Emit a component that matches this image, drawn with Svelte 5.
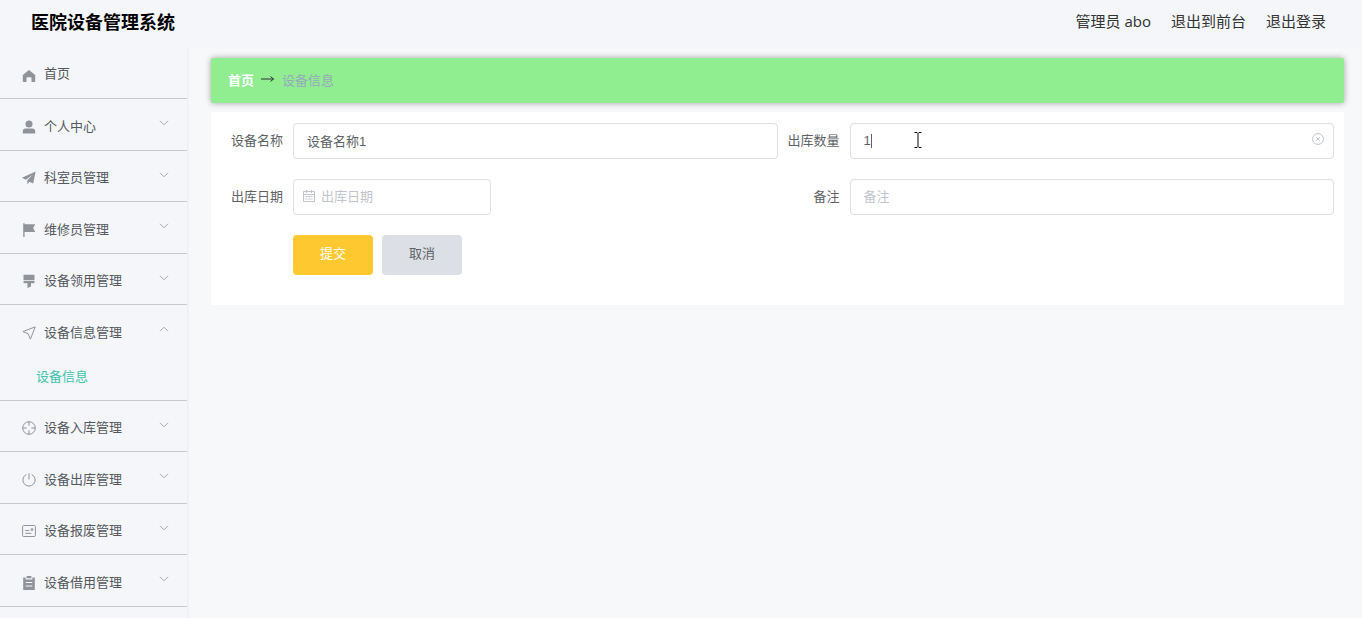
<script lang="ts">
    type Item = {title: string; icon: string; children?: string[]}

    const menu: Item[] = [
        {title: '首页', icon: 'home'},
        {title: '个人中心', icon: 'user', children: []},
        {title: '科室员管理', icon: 'promotion', children: []},
        {title: '维修员管理', icon: 'flag', children: []},
        {title: '设备领用管理', icon: 'brush', children: []},
        {title: '设备信息管理', icon: 'position', children: ['设备信息']},
        {title: '设备入库管理', icon: 'aim', children: []},
        {title: '设备出库管理', icon: 'switch', children: []},
        {title: '设备报废管理', icon: 'postcard', children: []},
        {title: '设备借用管理', icon: 'order', children: []},
    ]

    let opened = $state('设备信息管理')
    let form = $state({name: '设备名称1', count: '1', date: '', remark: ''})

    function toggle(title: string) {
        opened = opened === title ? '' : title
    }
</script>

{#snippet icon(name: string)}
    <svg class="icon" viewBox="0 0 14 14" aria-hidden="true">
        {#if name === 'home'}
            <path d="M7 1 .8 6v6.2q0 .8.8.8h2.900V9.200q0-.9.9-.9h3.200q.9 0 .9.9V13h2.900q.8 0 .8-.8V6z" />
        {:else if name === 'user'}
            <circle cx="7" cy="3.900" r="3.500" />
            <path d="M.8 13v-1.600Q.8 8.600 3.600 8.600h6.800q2.800 0 2.800 2.800V13q0 .5-.5.5H1.300Q.8 13.500 .8 13z" />
        {:else if name === 'promotion'}
            <path d="M13.600 .6 0 6.700 3.800 8.700 11 3.400 5.300 9.300V13.200l2.200-2.500 3.700 1.900z" />
        {:else if name === 'flag'}
            <path d="M1.200 .3h1.400v.9h10.600L11.200 5l2 4H2.600v5H1.200z" />
        {:else if name === 'brush'}
            <path d="M1.500 .7h11v5.200h-11zM1.500 6.800h11v1.600q0 .8-.8.8H9v3.300L5.500 14V9.200H2.300q-.8 0-.8-.8z" />
        {:else if name === 'position'}
            <path class="line" d="M13.200 .9 .9 5.600 6.100 7.700l2.300 5.500z" />
        {:else if name === 'aim'}
            <circle class="line" cx="7" cy="7" r="6.300" />
            <path class="line" d="M7 .7v4M7 9.300v4M.7 7h4M9.300 7h4" />
        {:else if name === 'switch'}
            <path class="line" d="M4.300 1.500a6.100 6.100 0 1 0 5.400 0M7 .3v6.200" />
        {:else if name === 'postcard'}
            <rect class="line" x=".6" y="1.500" width="12.800" height="11" rx="1" />
            <path class="line" d="M3.300 6.500h4M3.300 9.300h6M9.200 4.800h1.600v1.500H9.200z" />
        {:else}
            <path fill-rule="evenodd" d="M4.600 0h4.800v2.200H4.600zM1.200 1.500h2.400v2h6.800v-2h2.400V14H1.200zM3.700 6v1.100h6.600V6zm0 3.500v1.100h6.600V9.500z" />
        {/if}
    </svg>
{/snippet}

<div class="page">
    <header>
        <h1>医院设备管理系统</h1>
        <nav class="account">
            <span>管理员 abo</span>
            <a href="#front">退出到前台</a>
            <a href="#logout">退出登录</a>
        </nav>
    </header>

    <div class="body">
        <aside>
            <ul class="menu">
                {#each menu as item}
                    <li>
                        {#if item.children}
                            <button
                                class="row"
                                type="button"
                                aria-expanded={opened === item.title}
                                onclick={() => toggle(item.title)}
                            >
                                {@render icon(item.icon)}
                                <span>{item.title}</span>
                                <svg class="arrow" class:up={opened === item.title} viewBox="0 0 10 6" aria-hidden="true">
                                    <path d="M1 .8l4 4 4-4" />
                                </svg>
                            </button>
                            {#if opened === item.title}
                                {#each item.children as child}
                                    <a class="child" href="#info">{child}</a>
                                {/each}
                            {/if}
                        {:else}
                            <a class="row home" href="#home">
                                {@render icon(item.icon)}
                                <span>{item.title}</span>
                            </a>
                        {/if}
                    </li>
                {/each}
            </ul>
        </aside>

        <main>
            <nav class="breadcrumb">
                <a href="#home">首页</a>
                <svg viewBox="0 0 14 8" aria-hidden="true"><path d="M0 4h12.500M9.500 1.500 12.500 4l-3 2.500" /></svg>
                <span>设备信息</span>
            </nav>

            <form onsubmit={(event) => event.preventDefault()}>
                <div class="field">
                    <label for="name">设备名称</label>
                    <input id="name" type="text" placeholder="设备名称" bind:value={form.name} />
                </div>
                <div class="field">
                    <label for="count">出库数量</label>
                    <div class="control">
                        <input id="count" type="text" placeholder="出库数量" bind:value={form.count} />
                        <span class="caret"></span>
                        <svg class="pointer" viewBox="0 0 8 16" aria-hidden="true">
                            <path d="M.5 .5H3l1 1 1-1h2.500M4 1.500v13M.5 15.500H3l1-1 1 1h2.500" />
                        </svg>
                        <button class="clear" type="button" aria-label="清空" onclick={() => (form.count = '')}>
                            <svg viewBox="0 0 12 12" aria-hidden="true">
                                <circle cx="6" cy="6" r="5.400" />
                                <path d="M4.200 4.200l3.600 3.600M7.800 4.200 4.200 7.800" />
                            </svg>
                        </button>
                    </div>
                </div>
                <div class="field">
                    <label for="date">出库日期</label>
                    <div class="control date">
                        <svg class="calendar" viewBox="0 0 12 12" aria-hidden="true">
                            <path d="M.5 1.500h11v10H.5zM.5 4.500h11M3.500 0v3M8.500 0v3M2.500 6.500h2M5 6.500h2M7.500 6.500h2M2.500 9h2M5 9h2M7.500 9h2" />
                        </svg>
                        <input id="date" type="text" placeholder="出库日期" bind:value={form.date} />
                    </div>
                </div>
                <div class="field">
                    <label for="remark">备注</label>
                    <input id="remark" type="text" placeholder="备注" bind:value={form.remark} />
                </div>
                <div class="actions">
                    <button class="submit" type="submit">提交</button>
                    <button class="cancel" type="button">取消</button>
                </div>
            </form>
        </main>
    </div>
</div>

<style>
    :global(body) {
        margin: 0;
        background: #f7f8fa;
    }

    .page {
        display: flex;
        flex-direction: column;
        min-height: 100vh;
        font-family: 'Liberation Sans', 'Noto Sans CJK SC', sans-serif;
        font-size: 13px;
        color: #606266;
    }

    .page :global(*) {
        box-sizing: border-box;
    }

    a {
        color: inherit;
        text-decoration: none;
    }

    button,
    input {
        font: inherit;
        color: inherit;
    }

    button {
        border: 0;
        background: none;
        padding: 0;
        cursor: pointer;
    }

    header {
        display: flex;
        align-items: center;
        justify-content: space-between;
        height: 48px;
        padding: 0 36px 2px 31px;
        background: #f4f6fa;
    }

    h1 {
        margin: 0;
        font-size: 18px;
        line-height: 24px;
        color: #000;
    }

    .account {
        display: flex;
        gap: 20px;
        padding-bottom: 4px;
        font-family: 'Open Sans', 'Noto Sans CJK SC', sans-serif;
        font-size: 15px;
        line-height: 20px;
        color: #333;
    }

    .body {
        display: flex;
        flex: 1;
    }

    aside {
        flex: none;
        width: 189px;
        border-right: 2px solid #eff1f4;
        background: #f4f6fa;
    }

    .menu {
        list-style: none;
        margin: 0;
        padding: 0;
    }

    .menu li {
        border-bottom: 1px solid #c8c9cf;
    }

    .row {
        display: flex;
        align-items: center;
        gap: 8px;
        width: 100%;
        height: 50px;
        padding: 4px 18px 0 22px;
        text-align: left;
        line-height: 20px;
        color: #55585d;
    }

    .row.home {
        padding-top: 2px;
    }

    .menu li:nth-child(even) .row {
        height: 51px;
    }

    .icon {
        flex: none;
        width: 14px;
        height: 14px;
        fill: #909399;
    }

    .home .icon {
        margin-top: 4px;
    }

    .line {
        fill: none;
        stroke: #909399;
    }

    .arrow {
        width: 10px;
        height: 6px;
        margin: 0 0 7px auto;
        fill: none;
        stroke: #a5a8ad;
    }

    .arrow.up {
        transform: rotate(180deg);
    }

    .child {
        display: block;
        height: 44px;
        padding-left: 36px;
        line-height: 42px;
        color: #41c3ad;
    }

    main {
        flex: 1;
        min-width: 0;
        padding: 10px 18px 20px 22px;
    }

    .breadcrumb {
        display: flex;
        align-items: center;
        gap: 7px;
        height: 45px;
        padding: 0 18px 3px 17px;
        border-radius: 2px;
        background: #90ee90;
        box-shadow: 0 0 6px rgba(0, 0, 0, 0.35);
        color: #97a8be;
    }

    .breadcrumb a {
        font-weight: bold;
        color: #fff;
    }

    .breadcrumb svg {
        width: 14px;
        height: 8px;
        fill: none;
        stroke: #303133;
    }

    form {
        display: grid;
        grid-template-columns: 1fr 1fr;
        row-gap: 20px;
        margin-top: 9px;
        padding: 11px 10px 30px;
        background: #fff;
    }

    .field {
        display: flex;
        min-width: 0;
    }

    label {
        flex: none;
        width: 72px;
        padding-right: 10px;
        line-height: 36px;
        text-align: right;
    }

    .control {
        position: relative;
        flex: 1;
    }

    .control.date {
        flex: none;
        width: 198px;
    }

    input {
        flex: 1;
        width: 100%;
        min-width: 0;
        height: 36px;
        padding: 0 13px 2px;
        border: 1px solid #dcdfe6;
        border-radius: 4px;
        outline: none;
        background: #fff;
    }

    input::placeholder {
        color: #c0c4cc;
        opacity: 1;
    }

    .date input {
        padding-left: 27px;
    }

    .caret {
        position: absolute;
        top: 11px;
        left: 21px;
        width: 1px;
        height: 14px;
        background: #606266;
    }

    .pointer {
        position: absolute;
        top: 9px;
        left: 64px;
        width: 8px;
        height: 16px;
        fill: none;
        stroke: #000;
        pointer-events: none;
    }

    .clear {
        position: absolute;
        top: 10px;
        right: 10px;
        width: 12px;
        height: 12px;
    }

    .clear svg {
        display: block;
        fill: none;
        stroke: #c0c4cc;
    }

    .calendar {
        position: absolute;
        top: 11px;
        left: 10px;
        width: 12px;
        height: 12px;
        fill: none;
        stroke: #c0c4cc;
    }

    .actions {
        display: flex;
        gap: 9px;
        padding-left: 72px;
    }

    .actions button {
        width: 80px;
        height: 40px;
        padding-bottom: 5px;
        border-radius: 4px;
    }

    .submit {
        background: #fdc830;
        color: #fff;
    }

    .cancel {
        background: #dcdfe6;
    }
</style>
